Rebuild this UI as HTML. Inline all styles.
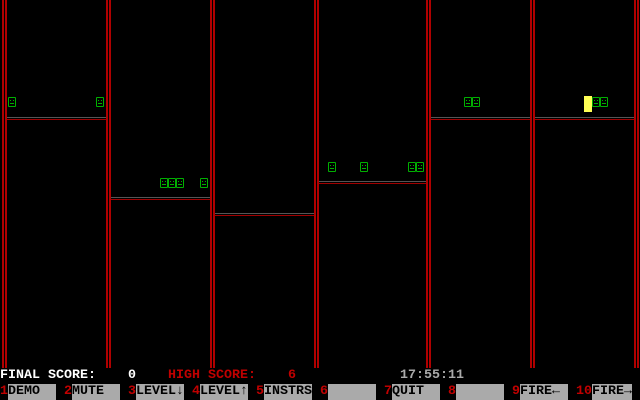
<!DOCTYPE html>
<html><head><style>
body{margin:0;width:640px;height:400px;background:#000;position:relative;overflow:hidden;font-family:"Liberation Mono",monospace;font-size:13.33px;font-weight:bold}
.w{position:absolute;top:0;height:368px;width:2px;background:#b00000}
.f{position:absolute;height:1px;background:#a00000}
.g{position:absolute;height:1px;background:#555}
.s{position:absolute;width:6px;height:8px;border:1px solid #00b000;border-radius:1px}
.s:before{content:"";position:absolute;left:1px;top:2px;width:1px;height:1px;background:#00b000;box-shadow:3px 0 0 #00b000}
.s:after{content:"";position:absolute;left:1px;top:5px;width:4px;height:1px;background:#00b000}
.t{position:absolute;line-height:16px;white-space:pre}
.k{position:absolute;top:384px;height:16px;line-height:16px;white-space:pre}
.r{color:#c00000}
.b{display:inline-block;background:#aaa;color:#000;width:48px;height:16px;vertical-align:top}
</style></head><body>
<div class="w" style="left:2px"></div><div class="w" style="left:5px"></div>
<div class="w" style="left:106px"></div><div class="w" style="left:109px"></div>
<div class="w" style="left:210px"></div><div class="w" style="left:213px"></div>
<div class="w" style="left:314px"></div><div class="w" style="left:317px"></div>
<div class="w" style="left:426px"></div><div class="w" style="left:429px"></div>
<div class="w" style="left:530px"></div><div class="w" style="left:533px"></div>
<div class="w" style="left:634px"></div><div class="w" style="left:637px"></div>

<div class="g" style="left:7px;width:99px;top:117px"></div><div class="f" style="left:7px;width:99px;top:119px"></div>
<div class="g" style="left:111px;width:99px;top:197px"></div><div class="f" style="left:111px;width:99px;top:199px"></div>
<div class="g" style="left:215px;width:99px;top:213px"></div><div class="f" style="left:215px;width:99px;top:215px"></div>
<div class="g" style="left:319px;width:107px;top:181px"></div><div class="f" style="left:319px;width:107px;top:183px"></div>
<div class="g" style="left:431px;width:99px;top:117px"></div><div class="f" style="left:431px;width:99px;top:119px"></div>
<div class="g" style="left:535px;width:99px;top:117px"></div><div class="f" style="left:535px;width:99px;top:119px"></div>

<div class="s" style="left:8px;top:97px"></div><div class="s" style="left:96px;top:97px"></div>
<div class="s" style="left:160px;top:178px"></div><div class="s" style="left:168px;top:178px"></div><div class="s" style="left:176px;top:178px"></div><div class="s" style="left:200px;top:178px"></div>
<div class="s" style="left:328px;top:162px"></div><div class="s" style="left:360px;top:162px"></div><div class="s" style="left:408px;top:162px"></div><div class="s" style="left:416px;top:162px"></div>
<div class="s" style="left:464px;top:97px"></div><div class="s" style="left:472px;top:97px"></div>
<div style="position:absolute;left:584px;top:96px;width:8px;height:16px;background:#ffff55"></div>
<div class="s" style="left:592px;top:97px"></div><div class="s" style="left:600px;top:97px"></div>

<div class="t" style="left:0;top:368px;color:#fff">FINAL SCORE:    0</div>
<div class="t r" style="left:168px;top:368px">HIGH SCORE:    6</div>
<div class="t" style="left:400px;top:368px;color:#aaa">17:55:11</div>

<div class="k" style="left:0"><span class="r">1</span><span class="b">DEMO</span></div>
<div class="k" style="left:64px"><span class="r">2</span><span class="b">MUTE</span></div>
<div class="k" style="left:128px"><span class="r">3</span><span class="b">LEVEL↓</span></div>
<div class="k" style="left:192px"><span class="r">4</span><span class="b">LEVEL↑</span></div>
<div class="k" style="left:256px"><span class="r">5</span><span class="b">INSTRS</span></div>
<div class="k" style="left:320px"><span class="r">6</span><span class="b"></span></div>
<div class="k" style="left:384px"><span class="r">7</span><span class="b">QUIT</span></div>
<div class="k" style="left:448px"><span class="r">8</span><span class="b"></span></div>
<div class="k" style="left:512px"><span class="r">9</span><span class="b">FIRE←</span></div>
<div class="k" style="left:576px"><span class="r">10</span><span class="b" style="width:40px">FIRE→</span></div>
</body></html>
